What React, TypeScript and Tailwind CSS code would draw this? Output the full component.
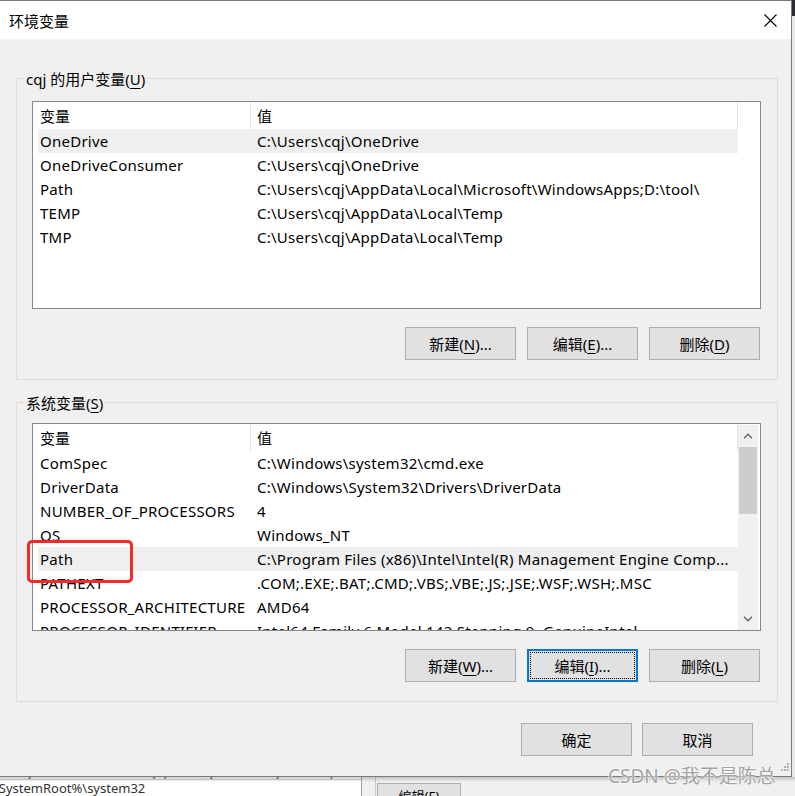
import React from "react";

type Row = { name: string; value: string; hl?: boolean };

const userRows: Row[] = [
  { name: "OneDrive", value: "C:\\Users\\cqj\\OneDrive", hl: true },
  { name: "OneDriveConsumer", value: "C:\\Users\\cqj\\OneDrive" },
  { name: "Path", value: "C:\\Users\\cqj\\AppData\\Local\\Microsoft\\WindowsApps;D:\\tool\\" },
  { name: "TEMP", value: "C:\\Users\\cqj\\AppData\\Local\\Temp" },
  { name: "TMP", value: "C:\\Users\\cqj\\AppData\\Local\\Temp" },
];

const sysRows: Row[] = [
  { name: "ComSpec", value: "C:\\Windows\\system32\\cmd.exe" },
  { name: "DriverData", value: "C:\\Windows\\System32\\Drivers\\DriverData" },
  { name: "NUMBER_OF_PROCESSORS", value: "4" },
  { name: "OS", value: "Windows_NT" },
  { name: "Path", value: "C:\\Program Files (x86)\\Intel\\Intel(R) Management Engine Comp...", hl: true },
  { name: "PATHEXT", value: ".COM;.EXE;.BAT;.CMD;.VBS;.VBE;.JS;.JSE;.WSF;.WSH;.MSC" },
  { name: "PROCESSOR_ARCHITECTURE", value: "AMD64" },
  { name: "PROCESSOR_IDENTIFIER", value: "Intel64 Family 6 Model 142 Stepping 9, GenuineIntel" },
];

function Chevron({ up }: { up?: boolean }) {
  return (
    <svg width="10" height="6" viewBox="0 0 10 6" className="block">
      {up ? (
        <path d="M1 5.2 L5 1.2 L9 5.2" fill="none" stroke="#606060" strokeWidth="1.4" />
      ) : (
        <path d="M1 0.8 L5 4.8 L9 0.8" fill="none" stroke="#606060" strokeWidth="1.4" />
      )}
    </svg>
  );
}

function List({ rows, scroll }: { rows: Row[]; scroll?: boolean }) {
  return (
    <div className="w-[729px] h-[208px] border border-[#828790] bg-white flex overflow-hidden">
      <div className="w-[705px] pl-[5px] flex flex-col overflow-hidden">
        <div className="h-[27px] w-[700px] shrink-0 flex items-center leading-[20px]">
          <div className="w-[213px] h-full pl-[2px] flex items-center border-r border-[#e5e5e5]">变量</div>
          <div className="flex-1 h-full pl-[6px] flex items-center border-r border-[#e5e5e5]">值</div>
        </div>
        {rows.map((r) => (
          <div
            key={r.name}
            className={
              r.hl
                ? "h-[24px] w-[700px] shrink-0 flex items-center bg-[#efefef] leading-[24px] tracking-[0.25px]"
                : "h-[24px] w-[700px] shrink-0 flex items-center leading-[24px] tracking-[0.25px]"
            }
          >
            <div className="w-[213px] pl-[2px] whitespace-nowrap overflow-hidden">{r.name}</div>
            <div className="flex-1 pl-[6px] whitespace-nowrap overflow-hidden">{r.value}</div>
          </div>
        ))}
      </div>
      {scroll ? (
        <div className="w-[22px] pt-[1px] pr-[2px] flex flex-col">
          <div className="flex-1 bg-[#f0f0f0] flex flex-col">
            <div className="h-[22px] flex items-center justify-center">
              <Chevron up />
            </div>
            <div className="h-[67px] mx-[1px] bg-[#cdcdcd]" />
            <div className="flex-1" />
            <div className="h-[22px] flex items-center justify-center">
              <Chevron />
            </div>
          </div>
        </div>
      ) : null}
    </div>
  );
}

function Btn({ label, mn, after, focus }: { label: string; mn: string; after?: string; focus?: boolean }) {
  return (
    <div
      className={
        focus
          ? "w-[111px] h-[33px] border-2 border-[#0078d7] bg-[#e1e1e1] p-[1px] flex"
          : "w-[111px] h-[33px] border border-[#adadad] bg-[#e1e1e1] flex"
      }
    >
      <div
        className={
          focus
            ? "flex-1 border border-dotted border-black flex items-center justify-center leading-[20px]"
            : "flex-1 flex items-center justify-center leading-[20px]"
        }
      >
        <span>
          {label}(<u className="underline-offset-[3px]">{mn}</u>){after}
        </span>
      </div>
    </div>
  );
}

function PlainBtn({ label }: { label: string }) {
  return (
    <div className="w-[111px] h-[33px] border border-[#adadad] bg-[#e1e1e1] flex items-center justify-center leading-[20px]">
      {label}
    </div>
  );
}

export default function App() {
  return (
    <div className="w-[795px] h-[796px] overflow-hidden relative bg-[#f0f0f0] text-[15px] leading-none text-black font-['Noto_Sans','Noto_Sans_CJK_SC',sans-serif]">
      <div className="flex h-[777px]">
        {/* dialog */}
        <div className="w-[792px] h-[777px] border-t border-r border-b border-[#7a7a7a] bg-[#f0f0f0] flex flex-col">
          <div className="h-[38px] bg-white flex items-center justify-between pl-[9px] pr-[14px] leading-[20px]">
            <span className="pt-[1px]">环境变量</span>
            <svg width="13" height="13" viewBox="0 0 13 13" className="block">
              <path d="M0.5 0.5 L12.5 12.5 M12.5 0.5 L0.5 12.5" stroke="#000" strokeWidth="1.1" fill="none" />
            </svg>
          </div>
          <div className="pl-[16px] pr-[14px] flex flex-col">
            {/* group 1 */}
            <div className="mt-[39px] w-[762px] relative border border-[#dcdcdc] pl-[15px] pt-[22px] pb-[19px] flex flex-col">
              <div className="absolute left-[7px] top-[-10px] bg-[#f0f0f0] px-[2px] h-[20px] flex items-center leading-[20px]">
                cqj 的用户变量(<u className="underline-offset-[3px]">U</u>)
              </div>
              <List rows={userRows} />
              <div className="mt-[18px] w-[729px] flex justify-end gap-[11px] pr-[1px]">
                <Btn label="新建" mn="N" after="..." />
                <Btn label="编辑" mn="E" after="..." />
                <Btn label="删除" mn="D" />
              </div>
            </div>
            {/* group 2 */}
            <div className="mt-[22px] w-[762px] relative border border-[#dcdcdc] pl-[15px] pt-[20px] pb-[19px] flex flex-col">
              <div className="absolute left-[7px] top-[-10px] bg-[#f0f0f0] px-[2px] h-[20px] flex items-center leading-[20px]">
                系统变量(<u className="underline-offset-[3px]">S</u>)
              </div>
              <List rows={sysRows} scroll />
              <div className="mt-[18px] w-[729px] flex justify-end gap-[11px] pr-[1px]">
                <Btn label="新建" mn="W" after="..." />
                <Btn label="编辑" mn="I" after="..." focus />
                <Btn label="删除" mn="L" />
              </div>
              <div className="absolute left-[10px] top-[137px] w-[106px] h-[43px] border-[3px] border-[#f22a2a] rounded-[5px]" />
            </div>
            <div className="mt-[21px] w-[737px] flex justify-end gap-[10px]">
              <PlainBtn label="确定" />
              <PlainBtn label="取消" />
            </div>
          </div>
        </div>
        {/* right strip of underlying desktop */}
        <div className="flex-1 flex flex-col">
          <div className="h-[16px] bg-[#2b2d3a]" />
          <div className="flex-1 bg-[#e8e8e8]" />
        </div>
      </div>
      {/* underlying window below dialog */}
      <div className="h-[19px] flex bg-[#f0f0f0] overflow-hidden">
        <div className="w-[362px] h-[19px] bg-white border-r border-[#a0a0a0] overflow-hidden text-[13px] text-[#333] flex flex-col">
          <div className="h-[3px] overflow-hidden shrink-0 border-b border-[#d0d0d0]">
            <div className="mt-[-12px] ml-[-14px] whitespace-nowrap leading-[15px] text-[#555]">
              C:\Program Files\Intel\Intel(R) Management Engine Components\iCLS\
            </div>
          </div>
          <div className="ml-[-12px] mt-[1px] whitespace-nowrap leading-[14px]">%SystemRoot%\system32</div>
        </div>
        <div className="w-[14px] bg-[#f0f0f0] border-r border-[#c8c8c8]" />
        <div className="flex-1 pt-[6px] pl-[1px]">
          <div className="w-[84px] h-[20px] border border-[#adadad] bg-[#e1e1e1] text-[13px] leading-[16px] flex justify-center pt-[4px]">
            编辑(E)
          </div>
        </div>
      </div>
      {/* shadow under dialog */}
      <div className="absolute left-0 top-[777px] w-[795px] h-[5px] bg-gradient-to-b from-[#00000030] to-transparent" />
      {/* watermark */}
      <div className="absolute left-[608px] top-[765px] text-[19px] leading-[22px] text-[#a3a3a3] whitespace-nowrap [text-shadow:0_0_2px_#fff,0_0_2px_#fff]">
        CSDN @我不是陈总
      </div>
      {/* resize grip */}
      <svg width="10" height="10" viewBox="0 0 10 10" className="absolute left-[780px] top-[762px]">
        <rect x="7" y="1" width="2" height="2" fill="#b0b0b0" />
        <rect x="4" y="4" width="2" height="2" fill="#b0b0b0" />
        <rect x="7" y="4" width="2" height="2" fill="#b0b0b0" />
        <rect x="1" y="7" width="2" height="2" fill="#b0b0b0" />
        <rect x="4" y="7" width="2" height="2" fill="#b0b0b0" />
        <rect x="7" y="7" width="2" height="2" fill="#b0b0b0" />
      </svg>
    </div>
  );
}
